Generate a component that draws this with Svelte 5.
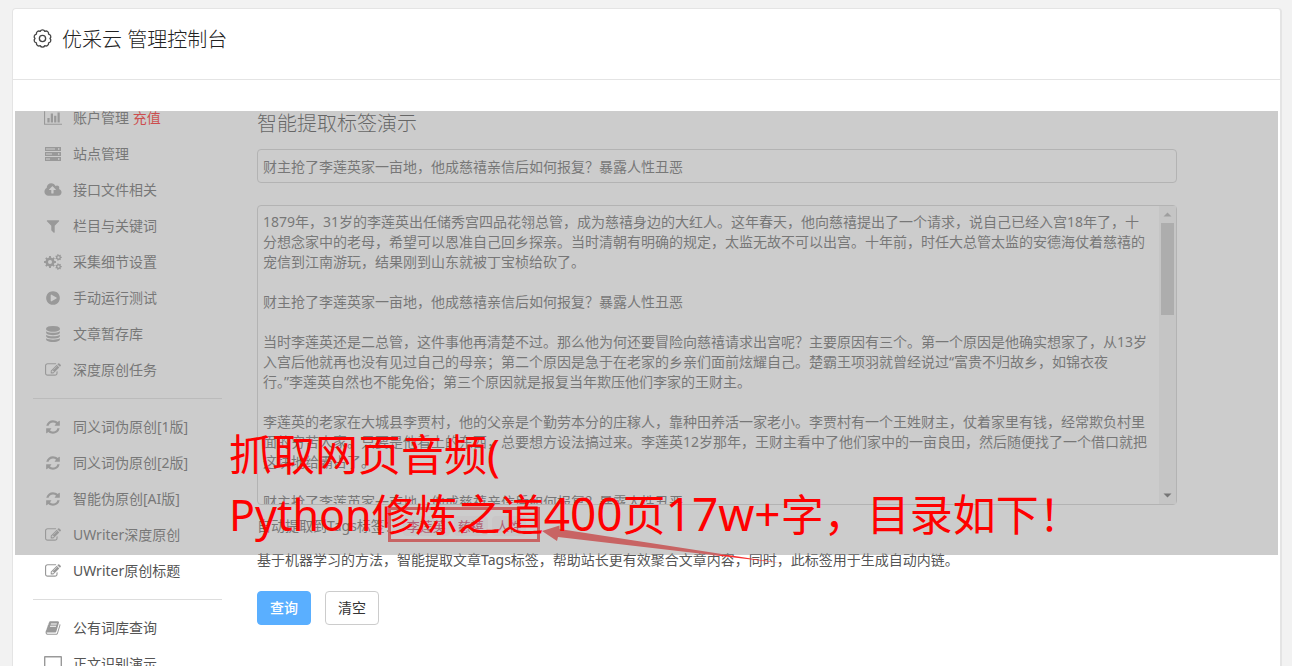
<script>
  const icons = {
    chart: { box: '0 0 2048 1792', w: 18, d: 'M640 896v512h-256v-512h256zm384-512v1024h-256v-1024h256zm1024 1152v128h-2048v-1536h128v1408h1920zm-640-896v768h-256v-768h256zm384-384v1152h-256v-1152h256z' },
    server: { box: '0 0 16 16', w: 16, d: 'M0 1h16v4h-16zM1 2.600v.8h9v-.8zM13 2.300v1.400h1.400v-1.400zM0 6h16v4h-16zM1 7.600v.8h6v-.8zM13 7.300v1.400h1.400v-1.400zM0 11h16v4h-16zM1 12.600v.8h4v-.8zM13 12.300v1.400h1.400v-1.400z' },
    cloud: { box: '0 0 1920 1792', w: 18, d: 'M1280 864q0-14-9-23l-352-352q-9-9-23-9t-23 9l-351 351q-10 12-10 24 0 14 9 23t23 9h224v352q0 13 9.5 22.5t22.5 9.5h192q13 0 22.5-9.5t9.5-22.5v-352h224q13 0 22.5-9.5t9.5-22.5zm640 288q0 159-112.5 271.5t-271.5 112.5h-1088q-185 0-316.5-131.5t-131.5-316.5q0-130 70-240t188-165q-2-30-2-43 0-212 150-362t362-150q156 0 285.5 87t188.5 231q71-62 166-62 106 0 181 75t75 181q0 76-41 138 130 31 213.5 135.5t83.5 238.5z' },
    filter: { box: '0 0 1792 1792', w: 16, d: 'M1595 295q17 41-14 70l-493 493v742q0 42-39 59-13 5-25 5-27 0-45-19l-256-256q-19-19-19-45v-486l-493-493q-31-29-14-70 17-39 59-39h1280q42 0 59 39z' },
    play: { box: '0 0 1792 1792', w: 16, d: 'M896 128q209 0 385.5 103t279.5 279.5 103 385.5-103 385.5-279.5 279.5-385.5 103-385.5-103-279.5-279.5-103-385.5 103-385.5 279.5-279.5 385.5-103zm384 823q32-18 32-55t-32-55l-544-320q-31-19-64-1-32 19-32 56v640q0 37 32 56 16 8 32 8 17 0 32-9z' },
    database: { box: '0 0 1792 1792', w: 16, d: 'M896 768q237 0 443-43t325-127v170q0 69-103 128t-280 93.5-385 34.5-385-34.5-280-93.5-103-128v-170q119 84 325 127t443 43zm0 768q237 0 443-43t325-127v170q0 69-103 128t-280 93.5-385 34.5-385-34.5-280-93.5-103-128v-170q119 84 325 127t443 43zm0-384q237 0 443-43t325-127v170q0 69-103 128t-280 93.5-385 34.5-385-34.5-280-93.5-103-128v-170q119 84 325 127t443 43zm0-1152q208 0 385 34.5t280 93.5 103 128v128q0 69-103 128t-280 93.5-385 34.5-385-34.5-280-93.5-103-128v-128q0-69 103-128t280-93.5 385-34.5z' },
    edit: { box: '0 0 1792 1792', w: 16, d: 'M888 1184l116-116-152-152-116 116v56h96v96h56zm440-720q-16-16-33 1l-350 350q-17 17-1 33t33-1l350-350q17-17 1-33zm80 594v190q0 119-84.5 203.5t-203.5 84.5h-832q-119 0-203.5-84.5t-84.5-203.5v-832q0-119 84.5-203.5t203.5-84.5h832q63 0 117 25 15 7 18 23 3 17-9 29l-49 49q-14 14-32 8-23-6-45-6h-832q-66 0-113 47t-47 113v832q0 66 47 113t113 47h832q66 0 113-47t47-113v-126q0-13 9-22l64-64q15-15 35-7t20 29zm-96-738l288 288-672 672h-288v-288zm444 132l-92 92-288-288 92-92q28-28 68-28t68 28l152 152q28 28 28 68t-28 68z' },
    refresh: { box: '0 0 1792 1792', w: 16, d: 'M1639 1056q0 5-1 7-64 268-268 434.5t-478 166.5q-146 0-282.5-55t-243.5-157l-129 129q-19 19-45 19t-45-19-19-45v-448q0-26 19-45t45-19h448q26 0 45 19t19 45-19 45l-137 137q71 66 161 102t187 36q134 0 250-65t186-179q11-17 53-117 8-23 30-23h192q13 0 22.5 9.5t9.5 22.5zm25-800v448q0 26-19 45t-45 19h-448q-26 0-45-19t-19-45 19-45l138-138q-148-137-349-137-134 0-250 65t-186 179q-11 17-53 117-8 23-30 23h-199q-13 0-22.5-9.5t-9.5-22.5v-7q65-268 270-434.5t480-166.5q146 0 284 55.5t245 156.5l130-129q19-19 45-19t45 19 19 45z' },
    book: { box: '0 0 1792 1792', w: 16, d: 'M1703 478q40 57 18 129l-275 906q-19 64-76.5 107.5t-122.5 43.5h-923q-77 0-148.5-53.5t-99.5-131.5q-24-67-2-127 0-4 3-27t4-37q1-8-3-21.5t-3-19.5q2-11 8-21t16.5-23.5 16.5-23.5q23-38 45-91.5t30-91.5q3-10 .5-30t-.5-28q3-11 17-28t17-23q21-36 42-92t25-90q1-9-2.5-32t.5-28q4-13 22-30.5t22-22.5q19-26 42.5-84.5t27.5-96.5q1-8-3-25.5t-2-26.5q2-8 9-18t18-23 17-21q8-12 16.5-30.5t15-35 16-36 19.5-32 26.5-23.5 36-11.5 47.5 5.5l-1 3q38-9 51-9h761q74 0 114 56t18 130l-274 906q-36 119-71.5 153.5t-128.5 34.5h-869q-27 0-38 15-11 16-1 43 24 70 144 70h923q29 0 56-15.5t35-41.5l300-987q7-22 5-57 38 15 59 43zm-1064 2q-4 13 2 22.5t20 9.5h608q13 0 25.5-9.5t16.5-22.5l21-64q4-13-2-22.5t-20-9.5h-608q-13 0-25.5 9.5t-16.5 22.5zm-83 256q-4 13 2 22.5t20 9.5h608q13 0 25.5-9.5t16.5-22.5l21-64q4-13-2-22.5t-20-9.5h-608q-13 0-25.5 9.5t-16.5 22.5z' },
    desktop: { box: '0 0 18 16', w: 18, d: 'M1 0h16q1 0 1 1v11q0 1-1 1h-6v1h2v1h-8v-1h2v-1h-6q-1 0-1-1v-11q0-1 1-1zM1.400 1.400v8.600h15.200v-8.600z' },
    cogs: { box: '0 0 18 16', w: 18, d: cog(6, 8, 6, 4.6, 2, 8) + cog(14.5, 3.4, 3.3, 2.5, 1.1, 7) + cog(14.5, 12.6, 3.3, 2.5, 1.1, 7) }
  };

  // Toothed wheel with a round hole, centred on (cx, cy).
  function cog(cx, cy, outer, inner, hole, teeth) {
    const pts = [];
    const step = (Math.PI * 2) / teeth;
    for (let i = 0; i < teeth; i++) {
      for (const [o, r] of [[-0.27, inner], [-0.2, outer], [0.2, outer], [0.27, inner]]) {
        const a = (i + o) * step;
        pts.push(`${(cx + r * Math.cos(a)).toFixed(2)} ${(cy + r * Math.sin(a)).toFixed(2)}`);
      }
    }
    return `M${pts.join('L')}ZM${cx - hole} ${cy}a${hole} ${hole} 0 1 0 ${2 * hole} 0a${hole} ${hole} 0 1 0 ${-2 * hole} 0Z`;
  }

  // Outline made of rounded lobes around the centre of a 20-unit box.
  function scallop(lobes, r) {
    const at = (i) => {
      const a = ((i + 0.5) * Math.PI * 2) / lobes - Math.PI / 2;
      return `${(10 + r * Math.cos(a)).toFixed(2)} ${(10 + r * Math.sin(a)).toFixed(2)}`;
    };
    let d = `M${at(0)}`;
    for (let i = 1; i <= lobes; i++) d += `A2.700 2.700 0 0 1 ${at(i)}`;
    return d + 'Z';
  }

  const groups = [
    [
      { icon: 'chart', label: '账户管理', extra: '充值' },
      { icon: 'server', label: '站点管理' },
      { icon: 'cloud', label: '接口文件相关' },
      { icon: 'filter', label: '栏目与关键词' },
      { icon: 'cogs', label: '采集细节设置' },
      { icon: 'play', label: '手动运行测试' },
      { icon: 'database', label: '文章暂存库' },
      { icon: 'edit', label: '深度原创任务' }
    ],
    [
      { icon: 'refresh', label: '同义词伪原创[1版]' },
      { icon: 'refresh', label: '同义词伪原创[2版]' },
      { icon: 'refresh', label: '智能伪原创[AI版]' },
      { icon: 'edit', label: 'UWriter深度原创' },
      { icon: 'edit', label: 'UWriter原创标题' }
    ],
    [
      { icon: 'book', label: '公有词库查询' },
      { icon: 'desktop', label: '正文识别演示' }
    ]
  ];

  let title = '财主抢了李莲英家一亩地，他成慈禧亲信后如何报复？暴露人性丑恶';
  let article = [
    '1879年，31岁的李莲英出任储秀宫四品花翎总管，成为慈禧身边的大红人。这年春天，他向慈禧提出了一个请求，说自己已经入宫18年了，十',
    '分想念家中的老母，希望可以恩准自己回乡探亲。当时清朝有明确的规定，太监无故不可以出宫。十年前，时任大总管太监的安德海仗着慈禧的',
    '宠信到江南游玩，结果刚到山东就被丁宝桢给砍了。',
    '',
    '财主抢了李莲英家一亩地，他成慈禧亲信后如何报复？暴露人性丑恶',
    '',
    '当时李莲英还是二总管，这件事他再清楚不过。那么他为何还要冒险向慈禧请求出宫呢？主要原因有三个。第一个原因是他确实想家了，从13岁',
    '入宫后他就再也没有见过自己的母亲；第二个原因是急于在老家的乡亲们面前炫耀自己。楚霸王项羽就曾经说过“富贵不归故乡，如锦衣夜',
    '行。”李莲英自然也不能免俗；第三个原因就是报复当年欺压他们李家的王财主。',
    '',
    '李莲英的老家在大城县李贾村，他的父亲是个勤劳本分的庄稼人，靠种田养活一家老小。李贾村有一个王姓财主，仗着家里有钱，经常欺负村里',
    '面的穷苦人家。只要是他看上的东西，总要想方设法搞过来。李莲英12岁那年，王财主看中了他们家中的一亩良田，然后随便找了一个借口就把',
    '这块地给霸占了。',
    '',
    '财主抢了李莲英家一亩地，他成慈禧亲信后如何报复？暴露人性丑恶'
  ].join('\n');
  const tags = ['李莲英', '慈禧', '人性'];
</script>

<div class="panel">
  <header>
    <svg class="gear" viewBox="0 0 20 20" aria-hidden="true">
      <path d={scallop(10, 7.9)} />
      <circle cx="10" cy="10" r="3.300" />
    </svg>
    <h1>优采云 管理控制台</h1>
  </header>

  <div class="view">
    <div class="columns">
      <nav>
        {#each groups as group}
          <ul>
            {#each group as item}
              <li>
                <a href="#top">
                  <span class="icon">
                    <svg viewBox={icons[item.icon].box} width={icons[item.icon].w} height="16" aria-hidden="true">
                      <path fill-rule="evenodd" d={icons[item.icon].d} />
                    </svg>
                  </span>
                  <span>{item.label}{#if item.extra}{' '}<em>{item.extra}</em>{/if}</span>
                </a>
              </li>
            {/each}
          </ul>
        {/each}
      </nav>

      <main>
        <h2>智能提取标签演示</h2>
        <input type="text" aria-label="标题" bind:value={title} />
        <div class="editor">
          <textarea aria-label="正文" wrap="off" bind:value={article}></textarea>
          <div class="scroll" aria-hidden="true">
            <svg viewBox="0 0 9 5"><path d="M0.500 4.500L4.500 0.500L8.500 4.500z" /></svg>
            <div class="thumb"></div>
            <svg class="down" viewBox="0 0 9 5"><path d="M0.500 0.500L4.500 4.500L8.500 0.500z" /></svg>
          </div>
        </div>
        <div class="tags">
          <span>自动提取到Tags标签：</span>
          {#each tags as tag}<code>{tag}</code>{/each}
          <svg class="mark" viewBox="0 0 402 60" aria-hidden="true">
            <rect x="3.500" y="3.500" width="149" height="32" />
            <path d="M156 26L173.500 20.500V24L395 58L172 32L171 36z" />
          </svg>
        </div>
        <p>基于机器学习的方法，智能提取文章Tags标签，帮助站长更有效聚合文章内容，同时，此标签用于生成自动内链。</p>
        <div class="actions">
          <button class="primary" type="button">查询</button>
          <button type="button">清空</button>
        </div>
      </main>
    </div>

    <div class="veil">
      <strong>抓取网页音频(<br />Python修炼之道<span>400</span>页<span>17w+</span>字，目录如下！</strong>
    </div>
  </div>
</div>

<style>
  :global(html),
  :global(body) {
    height: 100%;
  }
  :global(body) {
    margin: 0;
    overflow: hidden;
    background: #f2f2f2;
    font: 14px/20px 'Noto Sans', 'Noto Sans CJK SC', sans-serif;
    color: #555;
  }
  :global(#app) {
    height: 100%;
  }
  .panel {
    box-sizing: border-box;
    min-height: 100%;
    margin: 8px 10px 0 12px;
    background: #fff;
    border: 1px solid #e4e4e4;
    border-right-width: 2px;
    border-radius: 4px;
  }
  header {
    display: flex;
    align-items: center;
    gap: 10px;
    height: 62px;
    padding: 0 20px 8px;
    border-bottom: 1px solid #e4e4e4;
  }
  .gear {
    width: 19px;
    height: 19px;
    margin-bottom: 4px;
    fill: none;
    stroke: #444;
    stroke-width: 1.400;
    stroke-linejoin: round;
  }
  h1,
  h2 {
    margin: 0;
    font-size: 20px;
    line-height: 28px;
    font-weight: 300;
    color: #222;
  }
  .view {
    position: relative;
    margin-top: 31px;
    overflow: hidden;
  }
  .columns {
    display: grid;
    grid-template-columns: 189px 1fr;
    gap: 35px;
    margin-top: -11px;
    padding: 0 103px 0 20px;
  }
  ul {
    list-style: none;
    margin: 0;
    padding: 0;
  }
  ul + ul {
    margin-top: 10px;
    padding-top: 10px;
    border-top: 1px solid #ddd;
  }
  li a {
    display: flex;
    align-items: center;
    gap: 10px;
    height: 36px;
    padding-left: 10px;
    color: #555;
    text-decoration: none;
  }
  .icon {
    display: flex;
    justify-content: center;
    width: 20px;
  }
  .icon svg {
    fill: #999;
  }
  em {
    font-style: normal;
    color: #f00;
  }
  h2 {
    margin: 10px 0 11px;
    color: #333;
  }
  input,
  textarea {
    display: block;
    box-sizing: border-box;
    width: 100%;
    margin: 0;
    padding: 6px 5px;
    border: 1px solid #ccc;
    border-radius: 4px;
    background: #fff;
    font: inherit;
    color: #555;
    outline: 0;
  }
  input {
    height: 34px;
  }
  .editor {
    position: relative;
    margin: 22px 0 11px;
  }
  textarea {
    height: 300px;
    overflow: hidden;
    resize: none;
  }
  .scroll {
    position: absolute;
    top: 1px;
    right: 1px;
    bottom: 1px;
    display: flex;
    flex-direction: column;
    align-items: center;
    width: 17px;
    background: #f1f1f1;
  }
  .scroll svg {
    width: 9px;
    height: 5px;
    margin: 6px 0;
    fill: #a3a3a3;
  }
  .scroll .down {
    margin-top: auto;
    fill: #505050;
  }
  .thumb {
    width: 13px;
    height: 92px;
    background: #c1c1c1;
  }
  .tags {
    position: relative;
    display: flex;
    align-items: center;
    gap: 4px;
    height: 20px;
  }
  code {
    padding: 0 4px;
    border-radius: 4px;
    background: #f9f2f4;
    font: inherit;
    font-size: 13px;
    color: #c7254e;
  }
  .mark {
    position: absolute;
    top: -11px;
    left: 129px;
    width: 402px;
    height: 60px;
  }
  .mark rect {
    fill: none;
    stroke: #f72f2f;
    stroke-width: 3;
  }
  .mark path {
    fill: #f72f2f;
  }
  p {
    margin: 14px 0 21px;
  }
  .actions {
    display: flex;
    gap: 14px;
  }
  button {
    width: 54px;
    height: 34px;
    padding: 0;
    border: 1px solid #ccc;
    border-radius: 4px;
    background: #fff;
    font: inherit;
    color: #333;
  }
  .primary {
    border-color: #5aafff;
    background: #5aafff;
    color: #fff;
    font-weight: 500;
  }
  .veil {
    position: absolute;
    top: 0;
    left: 2px;
    right: 2px;
    height: 444px;
    background: rgba(153, 153, 153, 0.5);
    pointer-events: none;
  }
  .veil strong {
    display: block;
    padding: 314px 0 0 214px;
    font-size: 43px;
    line-height: 60px;
    font-weight: 400;
    color: #f00;
    white-space: nowrap;
  }
  .veil span {
    font-size: 46px;
    line-height: 1;
  }
</style>
